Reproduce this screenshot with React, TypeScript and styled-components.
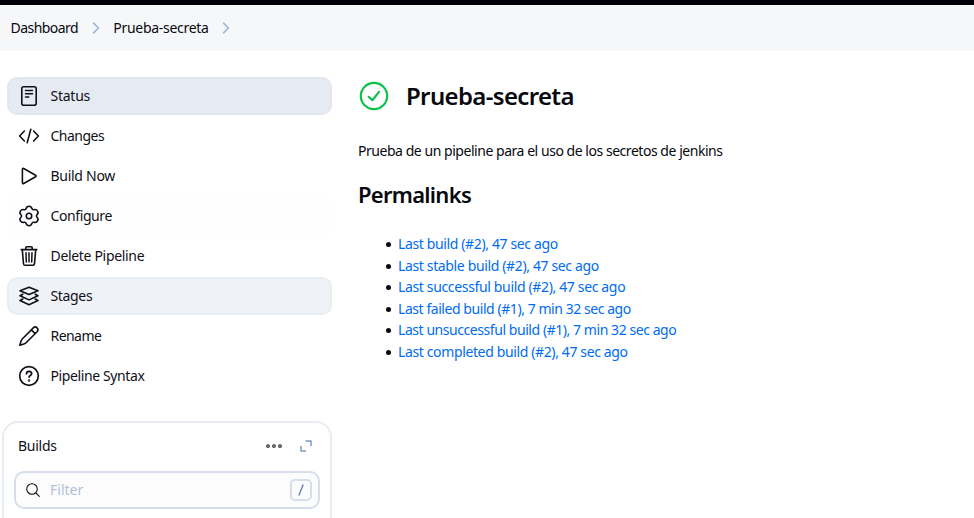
import React from "react";
import styled, { createGlobalStyle, css } from "styled-components";

const GlobalStyle = createGlobalStyle`
  *, *::before, *::after { box-sizing: border-box; }
  html, body { margin: 0; height: 100%; overflow: hidden; background: #fff; }
  body {
    font-family: "Noto Sans", sans-serif;
    font-size: 14px;
    line-height: 20px;
    color: #101018;
  }
`;

const Page = styled.div`
  height: 518px;
  overflow: hidden;
  display: flex;
  flex-direction: column;
`;

const TopStrip = styled.div`
  flex: 0 0 5px;
  background: #00000a;
`;

const Breadcrumbs = styled.nav`
  flex: 0 0 46px;
  display: flex;
  align-items: center;
  padding-left: 10.5px;
  background: #f6f7f9;
`;

const Label = styled.span<{ $track?: number }>`
  white-space: nowrap;
  letter-spacing: ${(p) => p.$track ?? 0}px;
`;

const Crumb = styled.div<{ $width: number }>`
  display: flex;
  width: ${(p) => p.$width}px;
  color: #08080f;
`;

const CrumbArrow = styled.svg`
  width: 8px;
  height: 12px;
  margin-right: 13.8px;
  fill: none;
  stroke: #9db6d6;
  stroke-width: 1.6;
  stroke-linecap: round;
  stroke-linejoin: round;
`;

const Columns = styled.div`
  flex: 1;
  min-height: 0;
  display: flex;
`;

const SidePanel = styled.aside`
  flex: 0 0 332px;
  padding-top: 26px;
`;

const Tasks = styled.nav`
  display: flex;
  flex-direction: column;
  gap: 2px;
  padding-left: 7px;
`;

type Tone = "plain" | "selected" | "hovered" | "faint";

const tones = {
  plain: css`background: transparent;`,
  faint: css`background: #fefefe;`,
  selected: css`background: #e6eaf3; border-color: #e1e7ee;`,
  hovered: css`background: #eff2f7; border-color: #e9eef3;`,
};

const Task = styled.a<{ $tone: Tone }>`
  display: flex;
  align-items: center;
  height: 38px;
  gap: 10.5px;
  padding-left: 9px;
  border: 2px solid transparent;
  border-radius: 10px;
  ${(p) => tones[p.$tone]}
`;

const TaskIcon = styled.svg`
  flex: none;
  width: 22px;
  height: 22px;
  overflow: visible;
  fill: none;
  stroke: #101018;
  stroke-width: 1.6;
  stroke-linecap: round;
  stroke-linejoin: round;
`;

const BuildsCard = styled.section`
  margin: 26px 0 0 2px;
  height: 140px;
  padding: 13px 10px 0 10px;
  border: 2px solid #e8edf3;
  border-radius: 16px;
`;

const BuildsHeader = styled.header`
  display: flex;
  align-items: center;
  height: 20px;
  padding: 0 8px 0 4px;
`;

const HeaderActions = styled.div`
  display: flex;
  align-items: center;
  gap: 17px;
  margin-left: auto;
`;

const Glyph = styled.svg`
  display: block;
  overflow: visible;
  fill: none;
  stroke-linecap: round;
  stroke-linejoin: round;
`;

const FilterBox = styled.div`
  display: flex;
  align-items: center;
  height: 38px;
  margin-top: 15px;
  padding: 0 6px 0 9px;
  border: 2px solid #d5deea;
  border-radius: 10px;
  background: #fcfcfd;
`;

const Placeholder = styled.span`
  flex: 1;
  margin-left: 9px;
  color: #b2c0d9;
`;

const ShortcutKey = styled.kbd`
  display: flex;
  align-items: center;
  justify-content: center;
  width: 22px;
  height: 22px;
  border: 2px solid #d5deea;
  border-radius: 5px;
`;

const Main = styled.main`
  flex: 1;
  padding: 30px 0 0 26px;
  color: #08080f;
`;

const TitleRow = styled.div`
  display: flex;
  align-items: center;
  height: 30px;
  gap: 17px;
  padding-left: 1px;
`;

const Heading = styled.h1<{ $track: number; $size: number }>`
  margin: 0;
  font-size: ${(p) => p.$size}px;
  line-height: 32px;
  font-weight: 600;
  letter-spacing: ${(p) => p.$track}px;
  white-space: nowrap;
`;

const Description = styled.p`
  margin: 30px 0 17px;
`;

const Links = styled.ul`
  margin: 23.4px 0 0;
  padding-left: 28px;
  list-style: none;
`;

const LinkRow = styled.li`
  display: flex;
  align-items: center;
  gap: 7px;
  height: 21.55px;
`;

const Bullet = styled.span`
  width: 5px;
  height: 5px;
  margin-top: 1px;
  border-radius: 50%;
  background: #08080f;
`;

const Permalink = styled.a`
  color: #006cf2;
`;

const icons = {
  status: (
    <>
      <rect x="3.8" y="1.8" width="14.4" height="18.4" rx="2" />
      <path d="M7.500 5.500h7M7.500 8.700h7M7.500 12h3.300" strokeWidth="1.500" />
    </>
  ),
  changes: <path d="M6.400 6 1.600 11l4.800 5M15.600 6 20.400 11l-4.800 5M12.800 4.200 9.200 17.800" />,
  play: <path d="M4.400 4.200v13.600c0 .7.7 1.100 1.300.7l11.900-6.700c.6-.4.6-1.200 0-1.600L5.700 3.500c-.6-.4-1.300 0-1.300.7Z" />,
  gear: (
    <>
      <path d="M11 1.300c1.700 0 2.500.9 2.900 2.300.3.900 1.100 1.300 2 1.100 1.500-.4 2.900 0 3.700 1.400.8 1.300.5 2.600-.6 3.700-.7.700-.7 1.700 0 2.400 1.100 1.100 1.400 2.400.6 3.700-.8 1.400-2.200 1.800-3.700 1.400-.9-.2-1.700.2-2 1.100-.4 1.400-1.200 2.300-2.900 2.300s-2.500-.9-2.900-2.300c-.3-.9-1.100-1.300-2-1.100-1.500.4-2.900 0-3.700-1.400-.8-1.300-.5-2.600.6-3.700.7-.7.7-1.700 0-2.400-1.100-1.100-1.400-2.400-.6-3.700.8-1.400 2.200-1.800 3.700-1.400.9.200 1.700-.2 2-1.100.4-1.400 1.200-2.300 2.900-2.300Z" />
      <circle cx="11" cy="11" r="2.700" />
    </>
  ),
  trash: (
    <>
      <path d="M4.300 4.900l1.200 13.800c.1 1 .8 1.600 1.700 1.600h7.600c.9 0 1.600-.6 1.700-1.600l1.200-13.800M3.200 4.600h15.600M7.800 4.300V2.700c0-.6.4-1 1-1h4.400c.6 0 1 .4 1 1v1.600" />
      <path d="M8 7.800l.3 9.200M11 7.800v9.200M14 7.800l-.3 9.200" strokeWidth="1.500" />
    </>
  ),
  layers: (
    <path d="M11 2.200 2 5.700 11 9.600l9-3.900ZM4.800 9.200 2 10.700l9 4.200 9-4.200-2.800-1.500M4.800 14 2 15.500l9 4.200 9-4.200-2.800-1.500" />
  ),
  pencil: (
    <path d="M15.300 2.900 4.500 13.700c-.7.700-1.100 1.500-1.400 2.400L1.800 20.200l4.100-1.300c.9-.3 1.700-.7 2.400-1.400L19.100 6.700c2.400-2.600-1.200-6.300-3.800-3.800ZM13.400 4.900l3.700 3.700" />
  ),
  help: (
    <>
      <circle cx="11" cy="11" r="9.300" strokeWidth="1.700" />
      <path d="M8.500 8.800c.1-3.200 5.200-3.100 5.200-.2 0 1.900-2.600 1.900-2.600 3.500" strokeWidth="1.700" />
      <circle cx="11" cy="15.400" r=".4" />
    </>
  ),
};

const tasks: { icon: keyof typeof icons; label: string; tone?: Tone; track: number }[] = [
  { icon: "status", label: "Status", tone: "selected", track: -0.25 },
  { icon: "changes", label: "Changes", track: -0.5 },
  { icon: "play", label: "Build Now", track: -0.28 },
  { icon: "gear", label: "Configure", tone: "faint", track: -0.4 },
  { icon: "trash", label: "Delete Pipeline", track: -0.32 },
  { icon: "layers", label: "Stages", tone: "hovered", track: -0.34 },
  { icon: "pencil", label: "Rename", track: -0.55 },
  { icon: "help", label: "Pipeline Syntax", track: -0.39 },
];

const permalinks: { text: string; track: number }[] = [
  { text: "Last build (#2), 47 sec ago", track: -0.37 },
  { text: "Last stable build (#2), 47 sec ago", track: -0.36 },
  { text: "Last successful build (#2), 47 sec ago", track: -0.35 },
  { text: "Last failed build (#1), 7 min 32 sec ago", track: -0.44 },
  { text: "Last unsuccessful build (#1), 7 min 32 sec ago", track: -0.44 },
  { text: "Last completed build (#2), 47 sec ago", track: -0.37 },
];

const Chevron = () => (
  <CrumbArrow viewBox="0 0 8 12">
    <path d="m1.500 1.200 5 4.800-5 4.800" />
  </CrumbArrow>
);

export default function App() {
  return (
    <Page>
      <GlobalStyle />
      <TopStrip />
      <Breadcrumbs>
        <Crumb $width={81}><Label $track={-0.55}>Dashboard</Label></Crumb>
        <Chevron />
        <Crumb $width={109.2}><Label $track={-0.29}>Prueba-secreta</Label></Crumb>
        <Chevron />
      </Breadcrumbs>
      <Columns>
        <SidePanel>
          <Tasks>
            {tasks.map((t) => (
              <Task key={t.label} $tone={t.tone ?? "plain"}>
                <TaskIcon viewBox="0 0 22 22">{icons[t.icon]}</TaskIcon>
                <Label $track={t.track}>{t.label}</Label>
              </Task>
            ))}
          </Tasks>
          <BuildsCard>
            <BuildsHeader>
              <Label $track={-0.25}>Builds</Label>
              <HeaderActions>
                <Glyph width="18" height="6" viewBox="0 0 18 6" stroke="#14141f" strokeWidth="1.100">
                  <circle cx="3" cy="3" r="1.300" />
                  <circle cx="9" cy="3" r="1.300" />
                  <circle cx="15" cy="3" r="1.300" />
                </Glyph>
                <Glyph width="12" height="12" viewBox="0 0 12 12" stroke="#7d98c4" strokeWidth="1.500">
                  <path d="M6 1h5v4.500M1 6.500V11h4.500" />
                </Glyph>
              </HeaderActions>
            </BuildsHeader>
            <FilterBox>
              <Glyph width="16" height="16" viewBox="0 0 16 16" stroke="#14141f" strokeWidth="1.100">
                <circle cx="7" cy="7" r="5.300" />
                <path d="m11 11 3.300 3.300" />
              </Glyph>
              <Placeholder>Filter</Placeholder>
              <ShortcutKey>
                <Glyph width="8" height="12" viewBox="0 0 8 12" stroke="#6581b3" strokeWidth="1.400">
                  <path d="M6 1 2 11" />
                </Glyph>
              </ShortcutKey>
            </FilterBox>
          </BuildsCard>
        </SidePanel>
        <Main>
          <TitleRow>
            <Glyph width="30" height="30" viewBox="0 0 30 30" stroke="#0cc24b" strokeWidth="2.200">
              <circle cx="15" cy="15" r="13.200" />
              <path d="m9.700 15.800 3.700 3.400 6.600-8.300" />
            </Glyph>
            <Heading $size={24} $track={-0.65}>Prueba-secreta</Heading>
          </TitleRow>
          <Description>
            <Label $track={-0.46}>Prueba de un pipeline para el uso de los secretos de jenkins</Label>
          </Description>
          <Heading as="h2" $size={22} $track={-0.72}>Permalinks</Heading>
          <Links>
            {permalinks.map((l) => (
              <LinkRow key={l.text}>
                <Bullet />
                <Permalink><Label $track={l.track}>{l.text}</Label></Permalink>
              </LinkRow>
            ))}
          </Links>
        </Main>
      </Columns>
    </Page>
  );
}
